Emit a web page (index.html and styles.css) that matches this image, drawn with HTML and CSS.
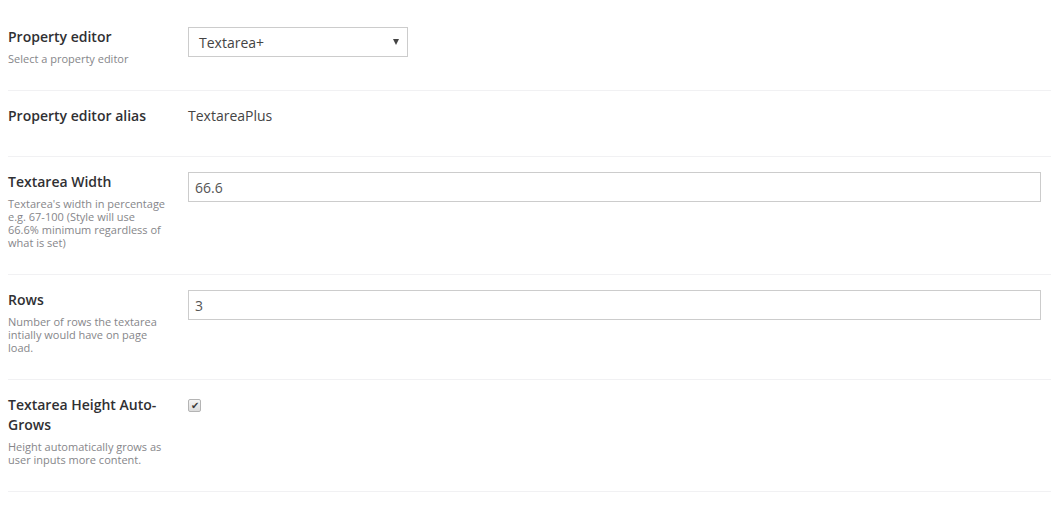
FILE: index.html
```html
<!DOCTYPE html>
<html>
<head>
  <title>Property editor settings</title>
  <link rel="stylesheet" href="styles.css">
</head>
<body>

  <div class="settings">
    <div class="row">
      <div class="info">
        <label class="name" for="id_editor">Property editor</label>
        <small class="desc">Select a property editor</small>
      </div>
      <div class="controls">
        <div class="select">
          <span>Textarea+</span>
          <span class="arrow"></span>
        </div>
      </div>
    </div>

    <div class="row">
      <div class="info">
        <label class="name">Property editor alias</label>
      </div>
      <div class="controls">
        <div class="plain">TextareaPlus</div>
      </div>
    </div>

    <div class="row">
      <div class="info">
        <label class="name" for="id_width">Textarea Width</label>
        <small class="desc">Textarea's width in percentage e.g. 67-100 (Style will use 66.6% minimum regardless of what is set)</small>
      </div>
      <div class="controls">
        <input type="text" id="id_width" class="text" value="66.6">
      </div>
    </div>

    <div class="row">
      <div class="info">
        <label class="name" for="id_rows">Rows</label>
        <small class="desc">Number of rows the textarea intially would have on page load.</small>
      </div>
      <div class="controls">
        <input type="text" id="id_rows" class="text" value="3">
      </div>
    </div>

    <div class="row">
      <div class="info">
        <label class="name" for="id_grow">Textarea Height Auto-Grows</label>
        <small class="desc">Height automatically grows as user inputs more content.</small>
      </div>
      <div class="controls">
        <span class="check" id="id_grow">&#10004;</span>
      </div>
    </div>
  </div>

</body>
</html>
```

FILE: styles.css
```css
body {
  margin: 0;
  background: #fff;
  font: 14px "Open Sans", Arial, sans-serif;
  color: #303033;
}

.settings {
  padding: 12px 0 0 8px;
}

.row {
  display: flex;
  padding: 15px 0 25px 0;
  border-bottom: 1px solid #f1f1f3;
}

.info {
  width: 160px;
  margin-right: 20px;
  flex: none;
}

.name {
  display: block;
  font-weight: 600;
  line-height: 20px;
  margin-bottom: 5px;
}

.desc {
  display: block;
  font-size: 11px;
  line-height: 13px;
  color: #86868a;
}

.controls {
  flex: 1;
  padding-right: 10px;
}

.select {
  width: 220px;
  height: 30px;
  box-sizing: border-box;
  border: 1px solid #cccccc;
  display: flex;
  align-items: center;
  justify-content: space-between;
  padding: 0 8px 0 10px;
  color: #444;
}

.arrow {
  width: 0;
  height: 0;
  border-left: 3px solid transparent;
  border-right: 3px solid transparent;
  border-top: 6px solid #444;
}

.plain {
  line-height: 20px;
  color: #444;
}

.text {
  display: block;
  width: 100%;
  height: 30px;
  box-sizing: border-box;
  border: 1px solid #cccccc;
  padding: 4px 6px;
  margin: 0;
  font: 14px "Open Sans", Arial, sans-serif;
  color: #555;
}

.check {
  display: block;
  width: 13px;
  height: 13px;
  margin-top: 4px;
  box-sizing: border-box;
  border: 1px solid #b4b4b4;
  border-radius: 2px;
  background: linear-gradient(#f4f4f4, #dcdcdc);
  color: #3a3a3a;
  font-size: 10px;
  line-height: 11px;
  text-align: center;
}
```
